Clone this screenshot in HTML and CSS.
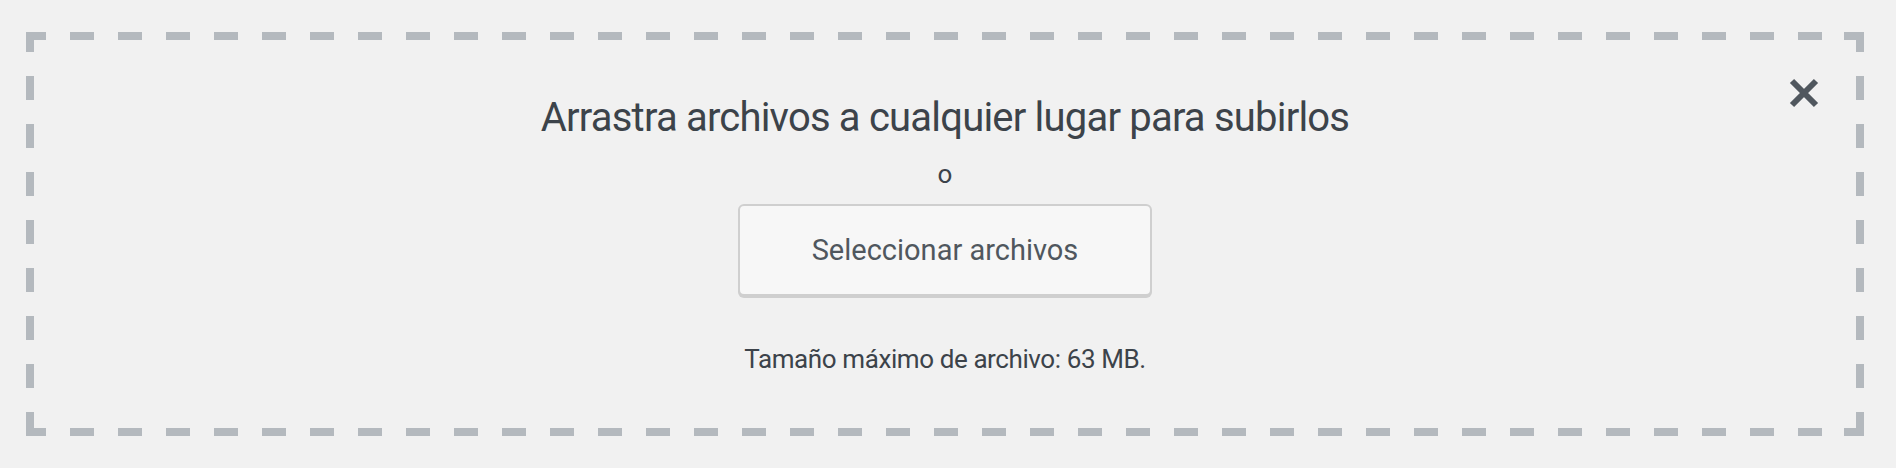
FILE: index.html
```html
<!DOCTYPE html>
<html lang="es">
<head>
  <meta charset="UTF-8">
  <meta name="viewport" content="width=device-width, initial-scale=1.0">
  <title>Subir archivos</title>
  <link rel="stylesheet" href="styles.css">
</head>
<body>

  <div class="uploader-inline">
    <button class="close" aria-label="Cerrar">
      <svg width="30" height="30" viewBox="0 0 30 30">
        <path d="M3 3 L27 27 M27 3 L3 27" stroke="#50575e" stroke-width="6" fill="none"/>
      </svg>
    </button>
    <div class="upload-ui">
      <h2 class="upload-instructions">Arrastra archivos a cualquier lugar para subirlos</h2>
      <p class="drop-or">o</p>
      <button class="browser button-hero">Seleccionar archivos</button>
    </div>
    <p class="max-upload-size">Tamaño máximo de archivo: 63 MB.</p>
  </div>

</body>
</html>
```

FILE: styles.css
```css
body {
  font-family: Roboto, "Noto Sans", sans-serif;
  background-color: #f1f1f1;
  color: #3c434a;
  margin: 0;
  padding: 32px 32px 32px 26px;
}
/* dashed frame drawn with gradients: 24px dashes, 24px gaps, 20px corners */
.uploader-inline {
  position: relative;
  box-sizing: border-box;
  height: 404px;
  padding: 8px;
  display: flex;
  flex-direction: column;
  align-items: center;
  background-image:
    linear-gradient(#b4b9be, #b4b9be),
    linear-gradient(#b4b9be, #b4b9be),
    repeating-linear-gradient(to right, #b4b9be 0 20px, transparent 20px 44px, #b4b9be 44px 48px),
    repeating-linear-gradient(to right, #b4b9be 0 20px, transparent 20px 44px, #b4b9be 44px 48px),
    repeating-linear-gradient(to bottom, #b4b9be 0 20px, transparent 20px 44px, #b4b9be 44px 48px),
    repeating-linear-gradient(to bottom, #b4b9be 0 20px, transparent 20px 44px, #b4b9be 44px 48px);
  background-size: 20px 8px, 20px 8px, 100% 8px, 100% 8px, 8px 100%, 8px 100%;
  background-position: right top, right bottom, left top, left bottom, left top, right top;
  background-repeat: no-repeat;
}
.close {
  position: absolute;
  top: 46px;
  right: 45px;
  width: 30px;
  height: 30px;
  padding: 0;
  border: none;
  background: none;
  cursor: pointer;
}
.close svg {
  display: block;
}
.upload-ui {
  display: flex;
  flex-direction: column;
  align-items: center;
}
.upload-instructions {
  font-size: 40px;
  font-weight: 400;
  letter-spacing: -0.8px;
  line-height: 56px;
  margin: 50px 0 0;
}
.drop-or {
  font-size: 26px;
  line-height: 36px;
  margin: 10px 0 0;
}
.button-hero {
  font-family: inherit;
  font-size: 29px;
  color: #50575e;
  background-color: #f7f7f7;
  border: 2px solid #cfcfcf;
  border-radius: 6px;
  box-shadow: 0 2px 0 #cfcfcf;
  width: 414px;
  height: 92px;
  margin-top: 12px;
  cursor: pointer;
}
.max-upload-size {
  font-size: 26px;
  letter-spacing: -0.4px;
  margin: 48px 0 0;
}
```
